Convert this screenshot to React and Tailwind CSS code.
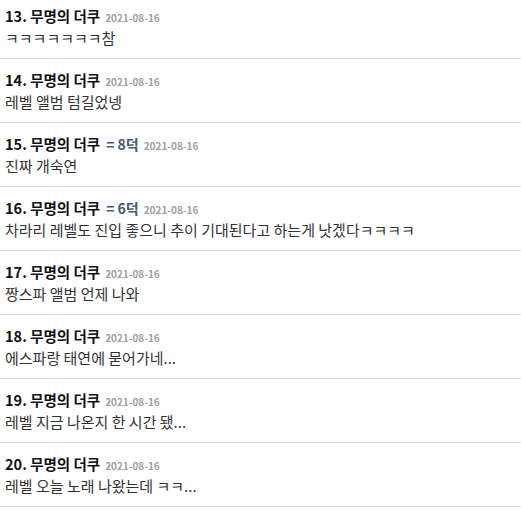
import React from "react";

const posts = [
  { no: 13, name: "무명의 더쿠", score: null, date: "2021-08-16", body: "ㅋㅋㅋㅋㅋㅋㅋ참" },
  { no: 14, name: "무명의 더쿠", score: null, date: "2021-08-16", body: "레벨 앨범 텀길었넹" },
  { no: 15, name: "무명의 더쿠", score: "= 8덕", date: "2021-08-16", body: "진짜 개숙연" },
  { no: 16, name: "무명의 더쿠", score: "= 6덕", date: "2021-08-16", body: "차라리 레벨도 진입 좋으니 추이 기대된다고 하는게 낫겠다ㅋㅋㅋㅋ" },
  { no: 17, name: "무명의 더쿠", score: null, date: "2021-08-16", body: "짱스파 앨범 언제 나와" },
  { no: 18, name: "무명의 더쿠", score: null, date: "2021-08-16", body: "에스파랑 태연에 묻어가네..." },
  { no: 19, name: "무명의 더쿠", score: null, date: "2021-08-16", body: "레벨 지금 나온지 한 시간 됐..." },
  { no: 20, name: "무명의 더쿠", score: null, date: "2021-08-16", body: "레벨 오늘 노래 나왔는데 ㅋㅋ..." },
];

export default function App() {
  return (
    <div
      className="w-[522px] h-[511px] overflow-hidden bg-white"
      style={{ fontFamily: '"Noto Sans CJK KR", "Noto Sans", sans-serif' }}
    >
      <ul className="w-[521px]">
        {posts.map((p, i) => (
          <li
            key={p.no}
            className={`${i === 0 ? "pt-[6px] h-[59px]" : "pt-[11px] h-[64px]"} px-[5px] border-b border-[#dcdcdc]`}
          >
            <div className="flex items-baseline h-[20px] leading-[20px]">
              <span className="text-[14.5px] font-bold text-[#111]">
                {p.no}. {p.name}
              </span>
              {p.score && (
                <span className="ml-[6px] text-[14px] font-bold text-[#44597a]">{p.score}</span>
              )}
              <span className="ml-[5px] text-[10px] font-bold text-[#a0a0a0]">{p.date}</span>
            </div>
            <div className="mt-[2px] h-[20px] leading-[20px] text-[15px] text-[#333]">{p.body}</div>
          </li>
        ))}
      </ul>
    </div>
  );
}
